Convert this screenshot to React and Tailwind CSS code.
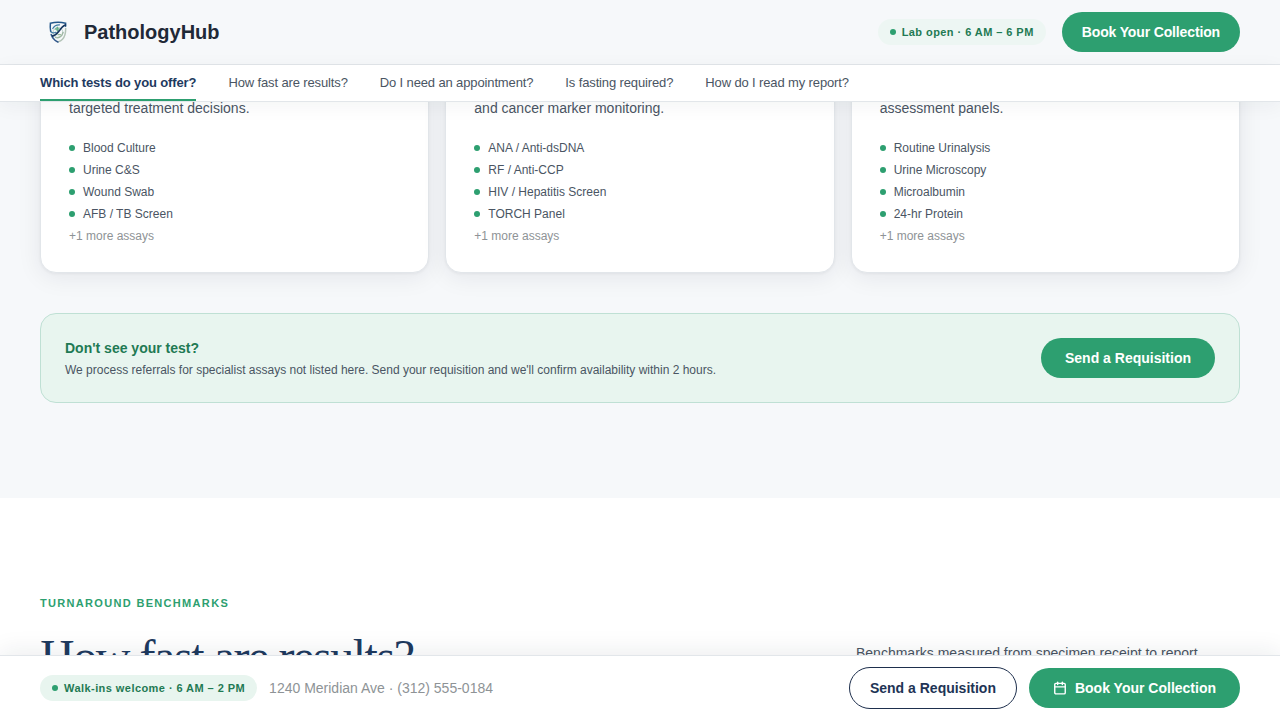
import { Calendar } from 'lucide-react'

const questions = [
  'Which tests do you offer?',
  'How fast are results?',
  'Do I need an appointment?',
  'Is fasting required?',
  'How do I read my report?',
]

const panels = [
  {
    blurb: 'targeted treatment decisions.',
    assays: ['Blood Culture', 'Urine C&S', 'Wound Swab', 'AFB / TB Screen'],
  },
  {
    blurb: 'and cancer marker monitoring.',
    assays: ['ANA / Anti-dsDNA', 'RF / Anti-CCP', 'HIV / Hepatitis Screen', 'TORCH Panel'],
  },
  {
    blurb: 'assessment panels.',
    assays: ['Routine Urinalysis', 'Urine Microscopy', 'Microalbumin', '24-hr Protein'],
  },
]

function Logo() {
  return (
    <svg width="36" height="36" viewBox="0 0 36 36" fill="none" strokeLinecap="round">
      {/* shield */}
      <path d="M25.7 14.500c0 5.500-1 8.500-3.200 10.700-1.200 1.200-2.800 2.100-4.500 2.700" stroke="#b3c4b8" strokeWidth="1.500" />
      <path d="M11.200 20.500c.9 2.700 2 4.300 3.500 5.500 1 .8 2 1.400 3.200 1.900" stroke="#31588c" strokeWidth="1.600" />
      <path d="M10.700 17.500c-.6-2.800-.6-5.500-.3-8.300 5-1.200 10.300-1.200 15.200 0v3" stroke="#24588b" strokeWidth="1.500" />
      {/* dish and slide */}
      <circle cx="18" cy="18.500" r="5" stroke="#b9cfc8" strokeWidth="1" />
      <path d="M15.500 23.500c3 1 6.500-1 7.500-5" stroke="#9fb7a3" strokeWidth="1.200" />
      <path d="M10.900 17.500c1 1.800 3.200 1.800 4.800.8M12.800 14.500c1.200-2.300 3.800-3.800 6.700-3.700" stroke="#3d7aa5" strokeWidth="1.200" />
      <path d="M25.300 11c-2.500.9-4.300 3.300-6.300 6-1.900 2.500-4 4.600-6.300 5" stroke="#17365f" strokeWidth="1.800" />
      <path d="M17.300 13.300v3.400M15.600 15h3.400" stroke="#68b08a" strokeWidth="1.500" />
      <path d="M18 20.700h2.500" stroke="#9bbd9b" strokeWidth="1.300" />
    </svg>
  )
}

function StatusPill({ children, className }) {
  return (
    <span className={`flex items-center gap-1.5 h-[26px] px-3 rounded-full text-[11px] font-bold tracking-[0.44px] text-[#1f7a54] ${className}`}>
      <span className="size-1.5 rounded-full bg-[#2d9f70]" />
      {children}
    </span>
  )
}

export default function App() {
  return (
    <div className="h-[720px] flex flex-col overflow-hidden bg-white text-[#4a5563] font-['Liberation_Sans',sans-serif]">

      {/* Header */}
      <header className="relative z-10 h-[65px] shrink-0 px-10 flex items-center justify-between bg-[#f6f8fa] border-b border-[#e2e6ea]">
        <div className="flex items-center gap-2">
          <Logo />
          <span className="text-xl font-bold text-[#1f2937]">PathologyHub</span>
        </div>
        <div className="flex items-center gap-4">
          <StatusPill className="bg-[#edf6f3]">Lab open · 6 AM – 6 PM</StatusPill>
          <button className="h-10 px-5 rounded-full bg-[#2d9f70] text-sm font-bold tracking-[-0.14px] text-white">
            Book Your Collection
          </button>
        </div>
      </header>

      {/* Question tabs */}
      <nav className="relative z-10 h-[37px] shrink-0 px-10 flex gap-8 bg-white border-b border-[#e2e6ea] text-[13px] tracking-[-0.13px] shadow-[0_4px_20px_rgba(26,35,50,0.05)]">
        {questions.map((question, i) => (
          <a
            key={question}
            className={i === 0
              ? 'flex items-center pt-0.5 border-b-2 border-[#2d9f70] font-bold text-[#1e3a5f]'
              : 'flex items-center pt-0.5 border-b-2 border-transparent'}
          >
            {question}
          </a>
        ))}
      </nav>

      <main className="flex-1 min-h-0 overflow-hidden">

        {/* Test categories */}
        <section className="h-[396px] px-10 bg-[#f6f8fa] overflow-hidden">
          <div className="-mt-8 grid grid-cols-3 gap-4">
            {panels.map(({ blurb, assays }) => (
              <article key={blurb} className="h-[203px] px-7 pt-[26px] rounded-2xl bg-white border border-[#e2e6ea] shadow-[0_1px_3px_rgba(26,26,46,0.05),0_4px_24px_rgba(26,26,46,0.08)]">
                <p className="text-sm leading-[22px]">{blurb}</p>
                <ul className="mt-5 flex flex-col gap-1 text-xs leading-[18px]">
                  {assays.map((assay) => (
                    <li key={assay} className="flex items-center gap-2">
                      <span className="size-1.5 rounded-full bg-[#2d9f70]" />
                      {assay}
                    </li>
                  ))}
                  <li className="text-[#8e9396]">+1 more assays</li>
                </ul>
              </article>
            ))}
          </div>

          <div className="mt-10 h-[90px] px-6 flex items-center justify-between rounded-2xl bg-[#e8f5ef] border border-[#bfe0d4]">
            <div>
              <h3 className="text-sm leading-[22px] font-bold text-[#1f7a54]">Don't see your test?</h3>
              <p className="mt-0.5 text-xs leading-[18px]">
                We process referrals for specialist assays not listed here. Send your requisition and we'll confirm availability within 2 hours.
              </p>
            </div>
            <button className="h-10 px-6 rounded-full bg-[#2d9f70] text-sm font-bold text-white">
              Send a Requisition
            </button>
          </div>
        </section>

        {/* Turnaround */}
        <section className="px-10 pt-24">
          <p className="text-[11px] leading-[18px] font-bold tracking-[1.32px] text-[#2d9f70]">TURNAROUND BENCHMARKS</p>
          <div className="mt-[18px] flex items-start justify-between">
            <h2 className="font-['Liberation_Serif',serif] text-[48px] leading-[53px] tracking-[-1.44px] text-[#1e3a5f]">
              How fast are results?
            </h2>
            <p className="mt-3 w-96 text-sm leading-[22px]">Benchmarks measured from specimen receipt to report</p>
          </div>
        </section>
      </main>

      {/* Sticky action bar */}
      <footer className="relative z-10 h-[65px] shrink-0 px-10 flex items-center justify-between bg-white border-t border-[#e2e6ea] shadow-[0_-4px_24px_rgba(26,35,50,0.08)]">
        <div className="flex items-center gap-3">
          <StatusPill className="bg-[#e8f5ef]">Walk-ins welcome · 6 AM – 2 PM</StatusPill>
          <span className="text-sm text-[#8e9396]">1240 Meridian Ave · (312) 555-0184</span>
        </div>
        <div className="flex items-center gap-3">
          <button className="h-[42px] px-5 rounded-full border border-[#1e2f4d] bg-white text-sm font-bold text-[#1e3455]">
            Send a Requisition
          </button>
          <button className="h-10 px-6 flex items-center gap-2 rounded-full bg-[#2d9f70] text-sm font-bold text-white">
            <Calendar size={14} strokeWidth={2.4} />
            Book Your Collection
          </button>
        </div>
      </footer>
    </div>
  )
}
